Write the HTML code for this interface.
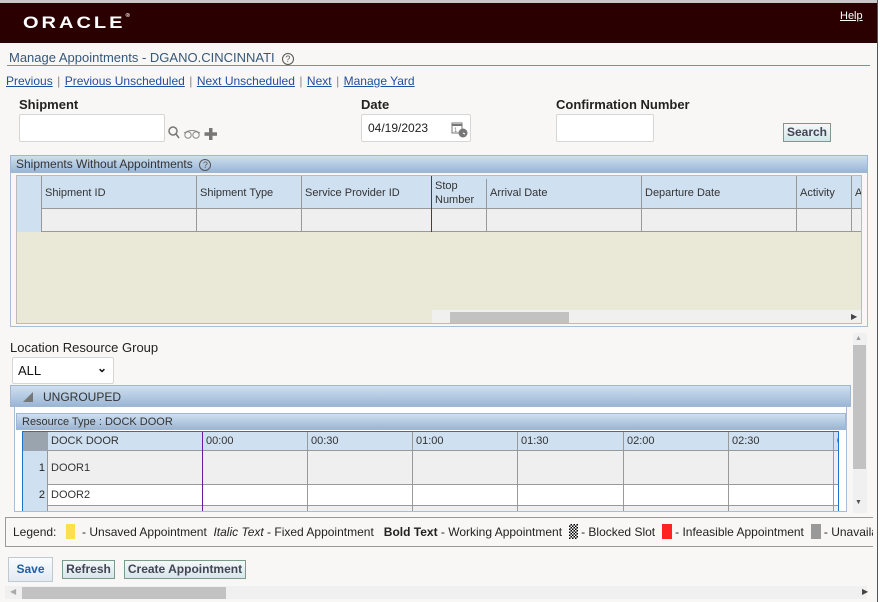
<!DOCTYPE html>
<html><head><meta charset="utf-8"><style>
*{box-sizing:border-box;margin:0;padding:0}
body{width:880px;height:602px;overflow:hidden;background:#f8f7f5;font-family:"Liberation Sans",sans-serif;position:relative;color:#222}
.a{position:absolute}
.lnk{color:#1f4fa0;text-decoration:underline;font-size:12px}
.sep{color:#888;font-size:12px}
.inp{position:absolute;background:#fff;border:1px solid #d6d6d6;border-radius:2px}
.lbl{position:absolute;font-size:13px;font-weight:bold;color:#222}
.ph{position:absolute;background:linear-gradient(#cfdfef,#9ab6d6);border:1px solid #9fb7d2;font-size:11px;color:#333;padding-left:5px;line-height:16px}
.cell{position:absolute;border-right:1px solid #999;font-size:11px;color:#333;padding-left:3px}
.btn{position:absolute;border:1px solid #7a9a8a;background:linear-gradient(#f4f8f8,#d6e6ea);font-size:12px;font-weight:bold;color:#445;text-align:center}
</style></head><body>
<div class="a" style="left:0;top:0;width:880px;height:3px;background:#c8c8c8"></div>
<div class="a" style="left:0;top:3px;width:880px;height:40px;background:#2a0000"></div>
<div class="a" style="left:23px;top:12px;color:#fff;font-size:20px;font-weight:bold;letter-spacing:3px;transform:scaleY(0.85);transform-origin:left center">ORACLE<span style="font-size:6px;vertical-align:top;letter-spacing:0">®</span></div>
<div class="a" style="left:840px;top:10px;color:#fff;font-size:11px;text-decoration:underline">Help</div>
<div class="a" style="left:877px;top:0;width:3px;height:602px;background:#fff;border-left:1px solid #555"></div>

<div class="a" style="left:9px;top:50px;font-size:13px;color:#36587a">Manage Appointments - DGANO.CINCINNATI &nbsp;<span style="display:inline-block;width:12px;height:12px;border:1px solid #555;border-radius:50%;font-size:9px;text-align:center;line-height:10px;color:#555">?</span></div>
<div class="a" style="left:7px;top:65px;width:863px;height:1px;background:#7a8fa8"></div>
<div class="a" style="left:6px;top:72px;white-space:nowrap"><span class="lnk">Previous</span> <span class="sep">|</span> <span class="lnk">Previous Unscheduled</span> <span class="sep">|</span> <span class="lnk">Next Unscheduled</span> <span class="sep">|</span> <span class="lnk">Next</span> <span class="sep">|</span> <span class="lnk">Manage Yard</span></div>

<div class="lbl" style="left:19px;top:97px">Shipment</div>
<div class="inp" style="left:19px;top:114px;width:146px;height:28px"></div>
<svg class="a" style="left:167px;top:125px" width="52" height="16"><circle cx="6" cy="6" r="4" fill="none" stroke="#777" stroke-width="1.5"/><line x1="9" y1="9" x2="12" y2="13" stroke="#777" stroke-width="1.5"/><circle cx="21" cy="10" r="3.2" fill="none" stroke="#888"/><circle cx="29" cy="10" r="3.2" fill="none" stroke="#888"/><path d="M17 8 Q25 3 33 8" fill="none" stroke="#888"/><rect x="42" y="3" width="3.5" height="12" fill="#777"/><rect x="37.5" y="7.3" width="12.5" height="3.5" fill="#777"/></svg>

<div class="lbl" style="left:361px;top:97px">Date</div>
<div class="inp" style="left:361px;top:114px;width:110px;height:28px;font-size:12px;padding:6px 0 0 6px;color:#222">04/19/2023</div>
<svg class="a" style="left:451px;top:120px" width="18" height="18"><rect x="1" y="3" width="10" height="10" fill="none" stroke="#777"/><line x1="1" y1="5" x2="11" y2="5" stroke="#777" stroke-width="2"/><text x="3" y="12" font-size="6" fill="#777">1</text><circle cx="12" cy="13" r="4.5" fill="#777"/><line x1="12" y1="13" x2="14" y2="14" stroke="#fff"/></svg>

<div class="lbl" style="left:556px;top:97px">Confirmation Number</div>
<div class="inp" style="left:556px;top:114px;width:98px;height:28px"></div>
<div class="btn" style="left:783px;top:123px;width:48px;height:19px;line-height:16px">Search</div>

<div class="a" style="left:10px;top:155px;width:858px;height:172px;border:1px solid #a9bdd4;background:#f8f7f5"></div>
<div class="ph" style="left:10px;top:155px;width:858px;height:18px;font-size:12px">Shipments Without Appointments &nbsp;<span style="display:inline-block;width:12px;height:12px;border:1px solid #555;border-radius:50%;font-size:9px;text-align:center;line-height:10px;color:#555">?</span></div>
<div class="a" style="left:16px;top:175px;width:846px;height:149px;background:#eae8d6;border:1px solid #bbb;overflow:hidden">
 <div class="a" style="left:0;top:0;width:846px;height:33px;background:#cfe0f0;border-bottom:1px solid #999"></div>
 <div class="a" style="left:0;top:33px;width:846px;height:23px;background:#efefef;border-bottom:1px solid #999"></div>
 <div class="a" style="left:0;top:0;width:25px;height:56px;background:#cfe0f0;border-right:1px solid #999"></div>
 <div class="cell" style="left:25px;top:0;width:155px;height:56px;line-height:35px">Shipment ID</div>
 <div class="cell" style="left:180px;top:0;width:105px;height:56px;line-height:35px">Shipment Type</div>
 <div class="cell" style="left:285px;top:0;width:130px;height:56px;line-height:35px;border-right:1px solid #5a2a7a">Service Provider ID</div>
 <div class="cell" style="left:415px;top:3px;width:55px;height:53px;line-height:14px">Stop<br>Number</div>
 <div class="cell" style="left:470px;top:0;width:155px;height:56px;line-height:35px">Arrival Date</div>
 <div class="cell" style="left:625px;top:0;width:155px;height:56px;line-height:35px">Departure Date</div>
 <div class="cell" style="left:780px;top:0;width:55px;height:56px;line-height:35px">Activity</div>
 <div class="cell" style="left:835px;top:0;width:20px;height:56px;line-height:35px;border:none">A</div>
 <div class="a" style="left:415px;top:134px;width:430px;height:14px;background:#f0f0f0"></div>
 <div class="a" style="left:433px;top:136px;width:119px;height:11px;background:#c2c2c2"></div>
 <div class="a" style="left:834px;top:136px;font-size:8px;color:#444">▶</div>
</div>

<div class="a" style="left:10px;top:340px;font-size:13px;color:#222">Location Resource Group</div>
<div class="inp" style="left:12px;top:357px;width:102px;height:27px;font-size:13px;padding:5px 0 0 5px;color:#111">ALL<span style="position:absolute;right:6px;top:3px;font-size:12px;font-weight:bold">⌄</span></div>

<div class="a" style="left:853px;top:333px;width:14px;height:180px;background:#f0f0f0"></div>
<div class="a" style="left:853px;top:345px;width:13px;height:124px;background:#c2c2c2"></div>
<div class="a" style="left:855px;top:335px;font-size:7px;color:#999">▲</div>
<div class="a" style="left:855px;top:499px;font-size:7px;color:#555">▼</div>

<div class="ph" style="left:10px;top:385px;width:841px;height:22px;line-height:22px;font-size:12px;padding-left:12px"><span style="display:inline-block;width:0;height:0;border-left:10px solid transparent;border-bottom:10px solid #777;margin-right:10px;vertical-align:-1px"></span>UNGROUPED</div>
<div class="a" style="left:14px;top:407px;width:833px;height:105px;border:1px solid #a9bdd4;border-top:none;background:#fff;overflow:hidden">
 <div class="ph" style="left:1px;top:6px;width:830px;height:17px;font-size:11px">Resource Type : DOCK DOOR</div>
 <div class="a" style="left:7px;top:24px;width:817px;height:85px;border:1px solid #1a74d0;overflow:hidden;background:#fff">
  <div class="a" style="left:0;top:0;width:817px;height:19px;background:#cfe0f0;border-bottom:1px solid #999"></div>
  <div class="a" style="left:0;top:19px;width:817px;height:34px;background:#efefef;border-bottom:1px solid #999"></div>
  <div class="a" style="left:0;top:73px;width:817px;height:20px;background:#efefef;border-top:1px solid #999"></div>
  <div class="a" style="left:0;top:0;width:25px;height:19px;background:#9aa4ae"></div>
  <div class="a" style="left:0;top:19px;width:25px;height:70px;background:#cfe0f0;border-right:1px solid #999;font-size:11px;text-align:right;padding-right:2px"><div style="height:34px;line-height:34px">1</div><div style="line-height:20px">2</div></div>
  <div class="cell" style="left:25px;top:0;width:155px;height:90px;border-right:1px solid #6a1aa0"><div style="line-height:19px">DOCK DOOR</div><div style="line-height:34px">DOOR1</div><div style="line-height:20px">DOOR2</div></div>
  <div class="cell" style="left:180px;top:0;width:105px;height:90px;line-height:19px">00:00</div>
  <div class="cell" style="left:285px;top:0;width:105px;height:90px;line-height:19px">00:30</div>
  <div class="cell" style="left:390px;top:0;width:105px;height:90px;line-height:19px">01:00</div>
  <div class="cell" style="left:495px;top:0;width:106px;height:90px;line-height:19px">01:30</div>
  <div class="cell" style="left:601px;top:0;width:105px;height:90px;line-height:19px">02:00</div>
  <div class="cell" style="left:706px;top:0;width:105px;height:90px;line-height:19px">02:30</div>
  <div class="cell" style="left:811px;top:0;width:10px;height:90px;line-height:19px">0</div>
 </div>
</div>

<div class="a" style="left:5px;top:517px;width:868px;height:30px;border-top:1px solid #999;border-bottom:1px solid #999;border-left:1px solid #999;background:#f8f7f5;font-size:12px;line-height:29px;padding-left:7px;white-space:nowrap;overflow:hidden;color:#222">Legend: &nbsp;&nbsp;<span style="display:inline-block;width:9px;height:15px;background:#ffdf50;vertical-align:-3px"></span>&nbsp; - Unsaved Appointment &nbsp;<i>Italic Text</i> - Fixed Appointment &nbsp; <b>Bold Text</b> - Working Appointment &nbsp;<span style="display:inline-block;width:9px;height:15px;background:repeating-conic-gradient(#000 0 25%,#fff 0 50%) 0 0/3px 3px;vertical-align:-3px"></span> - Blocked Slot &nbsp;<span style="display:inline-block;width:10px;height:15px;background:#f22;vertical-align:-3px"></span> - Infeasible Appointment &nbsp;<span style="display:inline-block;width:10px;height:15px;background:#999;vertical-align:-3px"></span> - Unavailable</div>

<div class="btn" style="left:8px;top:557px;width:45px;height:25px;line-height:23px;border-color:#c0c8d0;background:linear-gradient(#fafcfe,#e2eaf2);color:#1f5ea8">Save</div>
<div class="btn" style="left:62px;top:560px;width:53px;height:19px;line-height:16px">Refresh</div>
<div class="btn" style="left:124px;top:560px;width:122px;height:19px;line-height:16px">Create Appointment</div>

<div class="a" style="left:5px;top:586px;width:862px;height:13px;background:#f0f0f0"></div>
<div class="a" style="left:22px;top:587px;width:204px;height:12px;background:#c2c2c2"></div>
<div class="a" style="left:10px;top:587px;font-size:8px;color:#aaa">◀</div>
<div class="a" style="left:862px;top:587px;font-size:8px;color:#444">▶</div>
</body></html>
